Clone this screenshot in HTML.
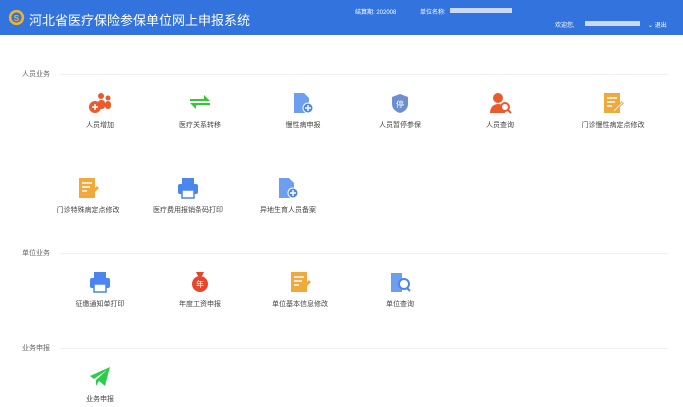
<!DOCTYPE html><html><head><meta charset="utf-8"><style>
body{margin:0;width:683px;height:407px;background:#fff;font-family:"Liberation Sans","Noto Sans CJK SC",sans-serif;position:relative;overflow:hidden}
.hd{position:absolute;left:0;top:0;width:683px;height:35px;background:#3373de}
.t{position:absolute;color:#fff}
.sec{position:absolute;left:22px;font-size:7px;color:#666}
.line{position:absolute;left:60px;width:608px;height:1px;background:#f0f0f4}
.it{position:absolute;width:120px;margin-left:-60px;text-align:center;font-size:7px;color:#444}
.it svg{display:block;margin:0 auto 6px}
.bl{position:absolute;height:5px;background:#c9d9f7}
</style></head><body>
<div class="hd">
<svg style="position:absolute;left:8px;top:9px" width="17" height="17" viewBox="0 0 20 20"><circle cx="10" cy="10" r="9" fill="#f4b324"/><circle cx="10" cy="10" r="6" fill="#3373de"/><text x="10" y="14" font-size="10" font-weight="bold" fill="#f4b324" text-anchor="middle" font-family="Liberation Sans">S</text></svg>
<div class="t" style="left:29px;top:10px;font-size:13px">河北省医疗保险参保单位网上申报系统</div>
<div class="t" style="left:355px;top:7px;font-size:6px">结算期: 202008</div>
<div class="t" style="left:420px;top:7px;font-size:6px">单位名称:</div>
<div class="bl" style="left:450px;top:8px;width:62px"></div>
<div class="t" style="left:555px;top:20px;font-size:6px">欢迎您,</div>
<div class="bl" style="left:585px;top:21px;width:55px"></div>
<div class="t" style="left:648px;top:20px;font-size:6px">⌄ 退出</div>
</div>
<div class="sec" style="top:69px">人员业务</div><div class="line" style="top:74px"></div>
<div class="sec" style="top:248px">单位业务</div><div class="line" style="top:253px"></div>
<div class="sec" style="top:343px">业务申报</div><div class="line" style="top:348px"></div>

<div class="it" style="left:100px;top:92px"><svg width="24" height="22" viewBox="0 0 24 22"><circle cx="13" cy="4" r="3" fill="#ea5a2b"/><circle cx="20" cy="6" r="2.5" fill="#ea5a2b"/><rect x="10" y="8" width="7" height="9" rx="3" fill="#ea5a2b"/><rect x="17" y="9" width="6" height="8" rx="3" fill="#ea5a2b"/><circle cx="7" cy="15" r="6" fill="#ea5a2b"/><path d="M4 15h6M7 12v6" stroke="#fff" stroke-width="1.5"/></svg>人员增加</div>
<div class="it" style="left:200px;top:92px"><svg width="24" height="22" viewBox="0 0 24 22"><path d="M2 7h14V3l6 6H2zM22 13H8v4l-6-6h20z" fill="#2dcc2d"/></svg>医疗关系转移</div>
<div class="it" style="left:303px;top:92px"><svg width="24" height="22" viewBox="0 0 24 22"><path d="M3 1h10l5 5v15H3z" fill="#6d9ef0"/><circle cx="17" cy="16" r="5" fill="#4a86ee" stroke="#fff"/><path d="M14 16h6M17 13v6" stroke="#fff" stroke-width="1.5"/></svg>慢性病申报</div>
<div class="it" style="left:400px;top:92px"><svg width="24" height="22" viewBox="0 0 24 22"><path d="M12 2l8 3v7c0 5-4 8-8 9-4-1-8-4-8-9V5z" fill="#6d8fd0"/><text x="12" y="15" font-size="8" fill="#fff" text-anchor="middle" font-family="Noto Sans CJK SC">停</text></svg>人员暂停参保</div>
<div class="it" style="left:500px;top:92px"><svg width="24" height="22" viewBox="0 0 24 22"><circle cx="10" cy="6" r="5" fill="#ea5a2b"/><path d="M2 21c0-6 4-9 8-9s6 2 7 4v5z" fill="#ea5a2b"/><circle cx="17" cy="15" r="4" fill="#fff" stroke="#ea5a2b" stroke-width="2"/><path d="M20 18l3 3" stroke="#ea5a2b" stroke-width="2"/></svg>人员查询</div>
<div class="it" style="left:613px;top:92px"><svg width="24" height="22" viewBox="0 0 24 22"><rect x="3" y="1" width="16" height="20" fill="#f2a93b"/><path d="M6 6h10M6 10h8M6 14h5" stroke="#fff" stroke-width="1.5"/><path d="M13 19l9-9" stroke="#f2a93b" stroke-width="3"/><path d="M13 19l9-9" stroke="#fff" stroke-width=".8"/></svg>门诊慢性病定点修改</div>

<div class="it" style="left:88px;top:177px"><svg width="24" height="22" viewBox="0 0 24 22"><rect x="3" y="1" width="16" height="20" fill="#f2a93b"/><path d="M6 6h10M6 10h8M6 14h5" stroke="#fff" stroke-width="1.5"/><path d="M13 19l9-9" stroke="#f2a93b" stroke-width="3"/></svg>门诊特殊病定点修改</div>
<div class="it" style="left:188px;top:177px"><svg width="24" height="22" viewBox="0 0 24 22"><rect x="6" y="1" width="12" height="6" fill="#4a86ee"/><rect x="2" y="7" width="20" height="10" rx="2" fill="#4a86ee"/><rect x="6" y="13" width="12" height="8" fill="#fff" stroke="#4a86ee" stroke-width="1.5"/></svg>医疗费用报销条码打印</div>
<div class="it" style="left:288px;top:177px"><svg width="24" height="22" viewBox="0 0 24 22"><path d="M3 1h10l5 5v15H3z" fill="#6d9ef0"/><circle cx="17" cy="16" r="5" fill="#4a86ee" stroke="#fff"/><path d="M14 16h6M17 13v6" stroke="#fff" stroke-width="1.5"/></svg>异地生育人员备案</div>

<div class="it" style="left:100px;top:271px"><svg width="24" height="22" viewBox="0 0 24 22"><rect x="6" y="1" width="12" height="6" fill="#4a86ee"/><rect x="2" y="7" width="20" height="10" rx="2" fill="#4a86ee"/><rect x="6" y="13" width="12" height="8" fill="#fff" stroke="#4a86ee" stroke-width="1.5"/></svg>征缴通知单打印</div>
<div class="it" style="left:200px;top:271px"><svg width="24" height="22" viewBox="0 0 24 22"><path d="M8 1h8l-2 4h-4z" fill="#e8452c"/><circle cx="12" cy="13" r="8" fill="#e8452c"/><text x="12" y="16" font-size="8" fill="#fff" text-anchor="middle" font-family="Noto Sans CJK SC">年</text></svg>年度工资申报</div>
<div class="it" style="left:300px;top:271px"><svg width="24" height="22" viewBox="0 0 24 22"><rect x="3" y="1" width="16" height="20" fill="#f2a93b"/><path d="M6 6h10M6 10h8M6 14h5" stroke="#fff" stroke-width="1.5"/><path d="M13 19l9-9" stroke="#f2a93b" stroke-width="3"/></svg>单位基本信息修改</div>
<div class="it" style="left:400px;top:271px"><svg width="24" height="22" viewBox="0 0 24 22"><rect x="3" y="2" width="11" height="19" fill="#6d9ef0"/><circle cx="16" cy="13" r="5" fill="#fff" stroke="#4a86ee" stroke-width="2"/><path d="M19 17l3 3" stroke="#4a86ee" stroke-width="2"/></svg>单位查询</div>

<div class="it" style="left:100px;top:366px"><svg width="24" height="22" viewBox="0 0 24 22"><path d="M2 10L22 1l-5 19-6-5-3 5v-6l11-10-13 9z" fill="#2dcc4d"/></svg>业务申报</div>
</body></html>
